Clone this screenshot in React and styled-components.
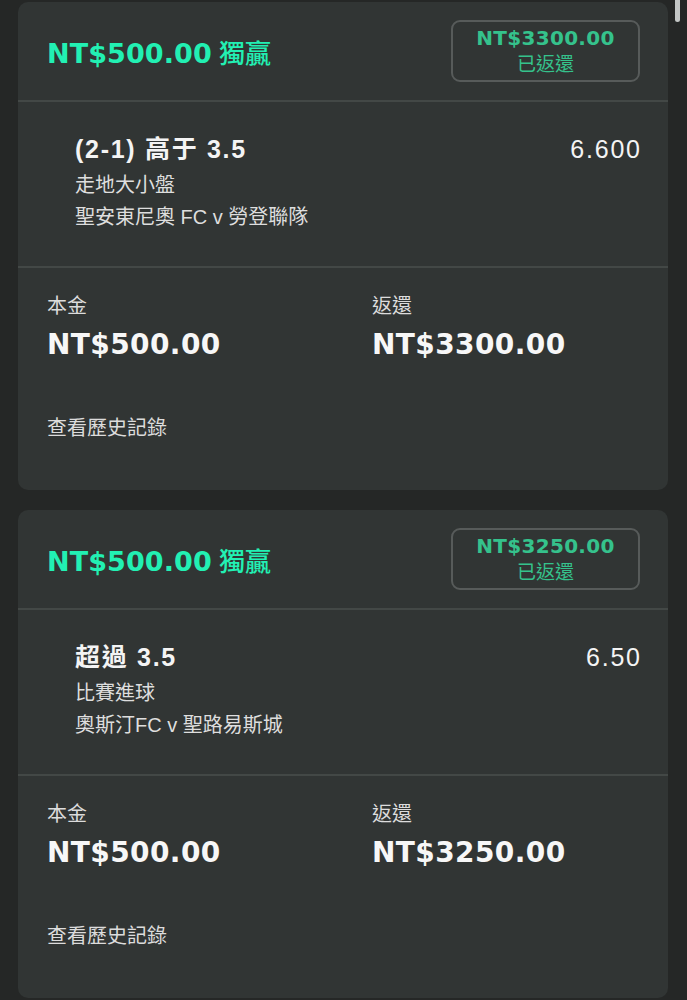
import React from "react";
import styled, { createGlobalStyle } from "styled-components";

const Global = createGlobalStyle`
  html, body { margin: 0; padding: 0; background: #252726; overflow: hidden; }
  body { font-family: "Liberation Sans", "Noto Sans CJK TC", sans-serif; }
  * { box-sizing: border-box; }
`;

const Page = styled.div`
  position: relative;
  width: 100%;
  height: 1000px;
  overflow: hidden;
  padding: 2px 19px 0 18px;
  display: flex;
  flex-direction: column;
  gap: 20px;
  background: #252726;
`;

const ScrollThumb = styled.span`
  position: absolute;
  z-index: 10;
  top: 0;
  left: 675px;
  display: block;
  width: 5px;
  height: 22px;
  border-radius: 0 0 3px 3px;
  background: #c4c7c6;
`;

const Card = styled.div`
  flex: none;
  width: 650px;
  background: #313534;
  border-radius: 10px;
  overflow: hidden;
`;

const Header = styled.div`
  height: 100px;
  padding: 0 28px 0 29px;
  display: flex;
  align-items: center;
  justify-content: space-between;
  border-bottom: 2px solid #434846;
`;

const Wide = "\"DejaVu Sans\", \"Noto Sans CJK TC\", sans-serif";
const CJK = "\"Noto Sans CJK TC\", sans-serif";

const HeadTitle = styled.div`
  display: flex;
  align-items: baseline;
  gap: 7px;
  color: #22f0b3;
`;

const HeadAmount = styled.span`
  font-family: ${Wide};
  font-weight: 700;
  font-size: 27px;
  letter-spacing: 0.1px;
`;

const HeadKind = styled.span`
  font-family: ${CJK};
  font-weight: 500;
  font-size: 26px;
`;

const ReturnBox = styled.div`
  width: 189px;
  height: 62px;
  border: 2px solid #575b5a;
  border-radius: 9px;
  display: flex;
  flex-direction: column;
  align-items: center;
  justify-content: center;
  color: #35c28c;
`;

const BoxAmount = styled.div`
  font-family: ${Wide};
  font-weight: 700;
  font-size: 20px;
  line-height: 24px;
  letter-spacing: 0.3px;
`;

const BoxLabel = styled.div`
  font-family: ${CJK};
  font-size: 19px;
  line-height: 26px;
`;

const Selection = styled.div`
  height: 166px;
  padding: 32px 28px 0 57px;
  display: flex;
  justify-content: space-between;
  align-items: flex-start;
  border-bottom: 2px solid #434846;
`;

const SelInfo = styled.div`
  display: flex;
  flex-direction: column;
`;

const SelTitle = styled.div`
  font-family: "Liberation Sans", "Noto Sans CJK TC", sans-serif;
  font-weight: 700;
  font-size: 25px;
  line-height: 30px;
  letter-spacing: 1.7px;
  color: #f4f4f4;
  margin-bottom: 5px;
`;

const SelSub = styled.div`
  font-family: "Liberation Sans", "Noto Sans CJK TC", sans-serif;
  font-size: 20px;
  line-height: 32px;
  color: #dedede;
`;

const Odds = styled.div`
  font-family: "Liberation Sans", sans-serif;
  font-size: 25px;
  line-height: 30px;
  color: #f4f4f4;
  letter-spacing: 1.8px;
  margin-right: -1.8px;
`;

const Stake = styled.div`
  padding: 23px 28px 49px 29px;
`;

const StakeGrid = styled.div`
  display: grid;
  grid-template-columns: 325px 1fr;
`;

const StakeCol = styled.div`
  display: flex;
  flex-direction: column;
  gap: 8px;
`;

const StakeLabel = styled.div`
  font-family: ${CJK};
  font-size: 20px;
  line-height: 28px;
  color: #dcdcdc;
`;

const StakeAmount = styled.div`
  font-family: ${Wide};
  font-weight: 700;
  font-size: 28px;
  line-height: 36px;
  color: #f7f7f7;
  letter-spacing: 0.4px;
`;

const HistoryLink = styled.div`
  margin-top: 50px;
  font-family: ${CJK};
  font-size: 20px;
  line-height: 28px;
  color: #dcdcdc;
`;

const bets = [
  {
    stake: "NT$500.00",
    kind: "獨贏",
    ret: "NT$3300.00",
    title: "(2-1) 高于 3.5",
    odds: "6.600",
    market: "走地大小盤",
    match: "聖安東尼奧 FC v 勞登聯隊",
  },
  {
    stake: "NT$500.00",
    kind: "獨贏",
    ret: "NT$3250.00",
    title: "超過 3.5",
    odds: "6.50",
    market: "比賽進球",
    match: "奧斯汀FC v 聖路易斯城",
  },
];

function BetCard({ bet }) {
  return (
    <Card>
      <Header>
        <HeadTitle>
          <HeadAmount>{bet.stake}</HeadAmount>
          <HeadKind>{bet.kind}</HeadKind>
        </HeadTitle>
        <ReturnBox>
          <BoxAmount>{bet.ret}</BoxAmount>
          <BoxLabel>已返還</BoxLabel>
        </ReturnBox>
      </Header>
      <Selection>
        <SelInfo>
          <SelTitle>{bet.title}</SelTitle>
          <SelSub>{bet.market}</SelSub>
          <SelSub>{bet.match}</SelSub>
        </SelInfo>
        <Odds>{bet.odds}</Odds>
      </Selection>
      <Stake>
        <StakeGrid>
          <StakeCol>
            <StakeLabel>本金</StakeLabel>
            <StakeAmount>{bet.stake}</StakeAmount>
          </StakeCol>
          <StakeCol>
            <StakeLabel>返還</StakeLabel>
            <StakeAmount>{bet.ret}</StakeAmount>
          </StakeCol>
        </StakeGrid>
        <HistoryLink>查看歷史記錄</HistoryLink>
      </Stake>
    </Card>
  );
}

export default function App() {
  return (
    <>
      <Global />
      <Page>
        <ScrollThumb aria-hidden="true" />
        {bets.map((b, i) => (
          <BetCard key={i} bet={b} />
        ))}
      </Page>
    </>
  );
}
